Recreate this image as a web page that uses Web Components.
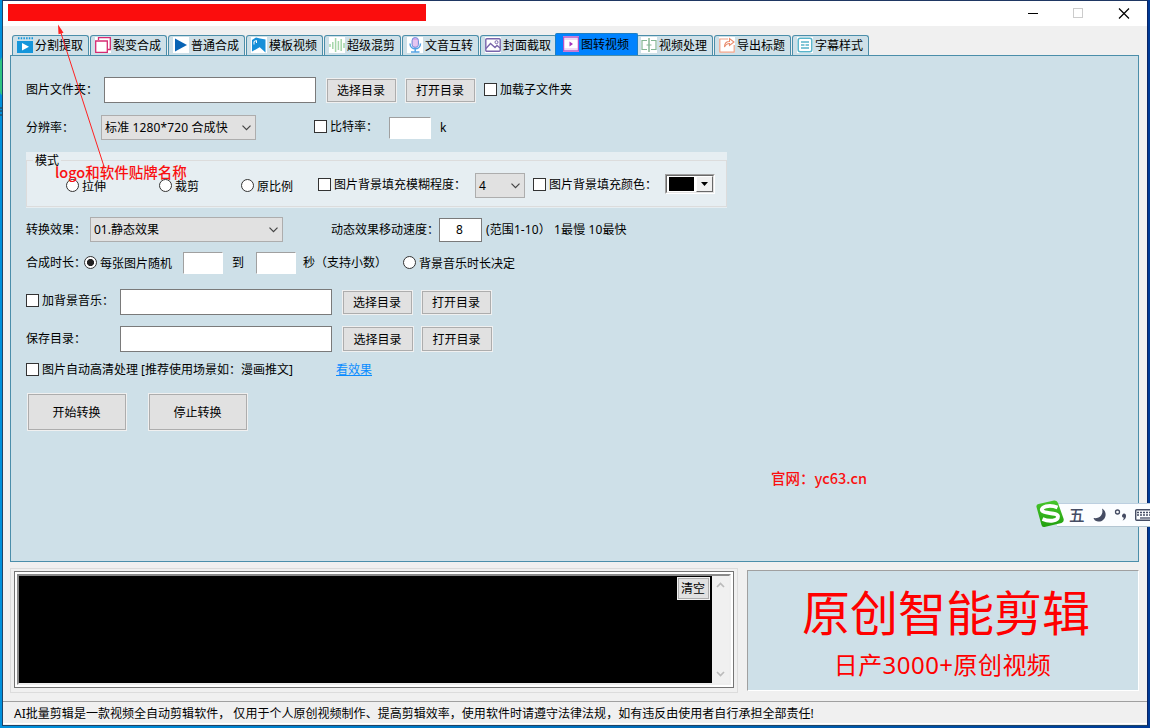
<!DOCTYPE html>
<html lang="zh-CN">
<head>
<meta charset="utf-8">
<title>图转视频</title>
<style>
  body {
    margin: 0;
    width: 1150px;
    height: 728px;
    overflow: hidden;
    position: relative;
    font: 12px/16px "Noto Sans", "Noto Sans CJK SC", sans-serif;
    color: #000;
    background: linear-gradient(90deg, #0090dc, #0068b4 60%, #003a96);
  }
</style>
</head>
<body>
<app-window>
  <tab-bar slot="tabs">
    <tab-item icon="split">分割提取</tab-item>
    <tab-item icon="copy">裂变合成</tab-item>
    <tab-item icon="play">普通合成</tab-item>
    <tab-item icon="template">模板视频</tab-item>
    <tab-item icon="wave">超级混剪</tab-item>
    <tab-item icon="mic">文音互转</tab-item>
    <tab-item icon="image">封面截取</tab-item>
    <tab-item icon="film" active>图转视频</tab-item>
    <tab-item icon="trim">视频处理</tab-item>
    <tab-item icon="export">导出标题</tab-item>
    <tab-item icon="text">字幕样式</tab-item>
  </tab-bar>

  <tab-panel>
    <form-row cols="78px 222px 79px 79px auto" height="26" gap="21">
      <win-label>图片文件夹：</win-label>
      <win-input w="212" h="26"></win-input>
      <win-button>选择目录</win-button>
      <win-button>打开目录</win-button>
      <win-check>加载子文件夹</win-check>
    </form-row>

    <form-row cols="75px 213px 75px 51px auto" height="25" gap="12">
      <win-label>分辨率：</win-label>
      <win-select w="155" style="letter-spacing: .13px">标准 1280*720 合成快</win-select>
      <win-check up>比特率：</win-check>
      <win-input w="42" h="22" flat></win-input>
      <win-label>k</win-label>
    </form-row>

    <group-box legend="模式">
      <form-row cols="93px 82px 77px 157px 58px 132px auto" height="25">
        <win-radio>拉伸</win-radio>
        <win-radio>裁剪</win-radio>
        <win-radio>原比例</win-radio>
        <win-check up>图片背景填充模糊程度：</win-check>
        <win-select w="50">4</win-select>
        <win-check up>图片背景填充颜色：</win-check>
        <color-picker></color-picker>
      </form-row>
    </group-box>

    <form-row cols="64px 241px 108px 47px auto" height="25" gap="9">
      <win-label>转换效果：</win-label>
      <win-select w="193">01.静态效果</win-select>
      <win-label>动态效果移动速度：</win-label>
      <win-input w="43" h="24">8</win-input>
      <win-label style="letter-spacing: .1px">(范围1-10） 1最慢 10最快</win-label>
    </form-row>

    <form-row cols="58px 99px 49px 24px 47px 100px auto" height="22" gap="10">
      <win-label>合成时长：</win-label>
      <win-radio checked>每张图片随机</win-radio>
      <win-input w="40" h="22" flat></win-input>
      <win-label>到</win-label>
      <win-input w="40" h="22" flat></win-input>
      <win-label>秒（支持小数）</win-label>
      <win-radio>背景音乐时长决定</win-radio>
    </form-row>

    <form-row cols="94px 222px 79px auto" height="26" gap="15">
      <win-check up>加背景音乐：</win-check>
      <win-input w="212" h="26"></win-input>
      <win-button>选择目录</win-button>
      <win-button>打开目录</win-button>
    </form-row>

    <form-row cols="94px 222px 79px auto" height="26" gap="11">
      <win-label>保存目录：</win-label>
      <win-input w="212" h="26"></win-input>
      <win-button w="72" h="26">选择目录</win-button>
      <win-button w="72" h="26">打开目录</win-button>
    </form-row>

    <form-row cols="310px auto" height="14" gap="10">
      <win-check>图片自动高清处理 [推荐使用场景如：漫画推文]</win-check>
      <win-link>看效果</win-link>
    </form-row>

    <form-row cols="1px 121px auto" height="38" gap="17">
      <span></span>
      <win-button w="100" h="38">开始转换</win-button>
      <win-button w="100" h="38">停止转换</win-button>
    </form-row>
  </tab-panel>

  <log-view slot="footer">清空</log-view>
  <promo-banner slot="footer">
    <span slot="title">原创智能剪辑</span>
    <span slot="subtitle">日产3000+原创视频</span>
  </promo-banner>

  <span slot="status">AI批量剪辑是一款视频全自动剪辑软件， 仅用于个人原创视频制作、提高剪辑效率，使用软件时请遵守法律法规，如有违反由使用者自行承担全部责任!</span>
</app-window>

<note-arrow></note-arrow>
<note-text style="left: 55px; top: 162px">logo和软件贴牌名称</note-text>
<note-text style="left: 771px; top: 468px">官网：yc63.cn</note-text>
<desktop-edge></desktop-edge>
<ime-bar>五</ime-bar>

<script>
  // Small base class: every element renders once into an open shadow root.
  class BaseElement extends HTMLElement {
    constructor() {
      super();
      this.attachShadow({ mode: "open" });
    }
    connectedCallback() {
      this.shadowRoot.innerHTML = `<style>${this.css}</style>${this.html}`;
    }
    attr(name, fallback) {
      return this.getAttribute(name) || fallback;
    }
    get css() {
      return "";
    }
    get html() {
      return "<slot></slot>";
    }
  }

  class AppWindow extends BaseElement {
    get css() {
      return `
        :host {
          display: flex;
          flex-direction: column;
          box-sizing: border-box;
          width: 1146px;
          height: 726px;
          margin-left: 2px;
          border: 1px solid #1d4468;
          border-top-color: #1f3763;
          border-right-color: #0a2463;
          background: #f0f0f0;
        }
        header {
          display: flex;
          justify-content: space-between;
          height: 25px;
          background: #fff;
        }
        .brand { width: 418px; height: 17px; margin: 3px 0 0 5px; background: #fb0d0d; }
        .controls { width: 119px; height: 25px; }
        .body { padding: 7px 7px 0; }
        .footer { display: flex; gap: 9px; padding: 6px 8px 0 7px; height: 133px; }
        .status {
          height: 23px;
          box-sizing: border-box;
          padding: 4px 0 0 11px;
          border-top: 1px solid #a0a0a0;
          border-bottom: 1px solid #fff;
          letter-spacing: .025px;
          white-space: nowrap;
        }
      `;
    }
    get html() {
      return `
        <header>
          <div class="brand"></div>
          <svg class="controls" viewBox="0 0 119 25" fill="none" shape-rendering="crispEdges">
            <path d="M0 12.500h10" stroke="#000"/>
            <rect x="45.500" y="7.500" width="9" height="9" stroke="#ccc"/>
            <path d="M91 7.500l10 10M101 7.500l-10 10" stroke="#000" stroke-width="1.200" shape-rendering="auto"/>
          </svg>
        </header>
        <div class="body"><slot name="tabs"></slot><slot></slot></div>
        <div class="footer"><slot name="footer"></slot></div>
        <div class="status"><slot name="status"></slot></div>
      `;
    }
  }

  class TabBar extends BaseElement {
    get css() {
      return `:host { display: flex; align-items: flex-end; gap: 1px; height: 22px; padding-left: 2px; }`;
    }
  }

  const ICONS = {
    split: `<path fill="#1496db" d="M0 4h16v12H0z"/><path stroke="#1496db" stroke-dasharray="1.500 1.200" stroke-width="2" d="M1 1.200l15 .1"/><path fill="#fff" d="M5 6v7.500l7-3.700z"/>`,
    copy: `<path fill="#fff" d="M0 0h16v16H0z"/><path fill="none" stroke="#d62a72" stroke-width="1.300" d="M3.500 3V.7h11.800v11.800H13M.7 4h11.600v11.300H.7z"/>`,
    play: `<path fill="#fff" d="M0 0h16v16H0z"/><path fill="#0763b5" d="M2 1.500v13L14 8z"/>`,
    template: `<path fill="#fff" d="M0 0h16v16H0z"/><path fill="#168fd8" d="M1 3l4-2.500 4 1v8.500L1 14.500zM9 1.500l5.500 1v13L9 10.500z"/><path fill="none" stroke="#fff" d="M3 7.500V4.500l2.500-1V6"/>`,
    wave: `<path fill="#fff" d="M0 0h16v16H0z"/><path stroke="#a5d6a9" stroke-width="1.500" d="M1 7v3M3.800 5v7M6.600 1v14M9.400 4v9M12.200 2v12M15 6v5"/>`,
    mic: `<path fill="#fff" d="M0 0h16v16H0z"/><rect x="5" y=".5" width="6.500" height="10" rx="3.200" fill="#d8a8e8" stroke="#7094dc"/><path stroke="#fff" stroke-width=".7" d="M6 4h4.500M6 6h4.500M6 8h4.500"/><path fill="none" stroke="#53a2e4" stroke-width="1.500" d="M3 6.500c0 7 10.500 7 10.500 0M8.200 12v2.500M4 15h8.500"/>`,
    image: `<path fill="#fff" d="M0 0h16v16H0z"/><rect x=".8" y="1.800" width="14.400" height="12.400" rx="1" fill="none" stroke="#7864aa" stroke-width="1.400"/><path fill="none" stroke="#7864aa" stroke-width="1.300" d="M1 11.500l4.500-5 4.500 4 2-2 3 2.500"/><circle cx="11.500" cy="5.200" r="1.500" fill="none" stroke="#7864aa"/>`,
    film: `<path fill="#fff" d="M0 0h16v16H0z"/><path fill="none" stroke="#b352c8" stroke-width="1.300" d="M.6 1h14.800v14H.6z"/><path stroke="#d9a6e4" stroke-width=".8" d="M1 3h14M1 13h14"/><path fill="#a534be" d="M6.500 5.500v5L10 8z"/>`,
    trim: `<path fill="#fff" d="M0 0h16v16H0z"/><path fill="none" stroke="#84b694" stroke-width="1.200" d="M8 3.500H1v9h7M8 3.500h7v9H8"/><path stroke="#fff" stroke-width="4" d="M8 3v10"/><path stroke="#84b694" stroke-width="1.500" d="M8 1v14"/><path stroke="#84b694" d="M5.500 8h5"/>`,
    export: `<path fill="#fff" d="M0 0h16v16H0z"/><path fill="none" stroke="#eda085" stroke-width="1.200" d="M9 2H.8v13.200h14.400V8"/><path fill="#fff" stroke="#e98b6c" stroke-width="1.100" d="M5.500 10c0-4 1.500-5.500 5-5.500V1.500L15 5l-4.500 3.500V6.500C8 6.500 6.500 8 5.500 10z"/>`,
    text: `<path fill="#fff" d="M0 0h16v16H0z"/><rect x="1.200" y="1.200" width="13.600" height="13.600" rx="2" fill="none" stroke="#58b4ca" stroke-width="1.500"/><path stroke="#58b4ca" stroke-width="1.400" d="M4 5h8M4 8h3.500M8.500 8H12M4 11h8"/>`,
  };

  class TabItem extends BaseElement {
    get css() {
      return `
        :host {
          display: flex;
          box-sizing: border-box;
          width: 77px;
          height: 20px;
          padding: 1px 0 0 4px;
          gap: 2px;
          border: 1px solid #4b8eaa;
          border-bottom: 0;
          border-radius: 3px 3px 0 0;
          background: #cee0e8;
          line-height: 18px;
          white-space: nowrap;
        }
        :host([active]) {
          position: relative;
          z-index: 1;
          width: 83px;
          height: 22px;
          margin: 0 -3px;
          padding: 2px 0 0 7px;
          border-color: #1d7fc4;
          border-radius: 2px 2px 0 0;
          background: #0083ff;
        }
        svg { flex: none; width: 16px; height: 16px; }
      `;
    }
    get html() {
      return `<svg viewBox="0 0 16 16">${ICONS[this.attr("icon")]}</svg><slot></slot>`;
    }
  }

  class TabPanel extends BaseElement {
    get css() {
      return `
        :host {
          display: block;
          box-sizing: border-box;
          width: 1129px;
          height: 507px;
          padding-left: 15px;
          border: 1px solid #4b8eaa;
          background: #cee0e8;
        }
      `;
    }
  }

  class FormRow extends BaseElement {
    get css() {
      return `
        :host {
          display: grid;
          grid-template-columns: ${this.attr("cols")};
          align-items: center;
          justify-items: start;
          height: ${this.attr("height")}px;
          padding-top: ${this.attr("gap", 0)}px;
          white-space: nowrap;
        }
      `;
    }
  }

  class WinLabel extends BaseElement {
    get css() {
      return `:host { display: block; margin-top: 0; }`;
    }
  }

  class WinLink extends BaseElement {
    get css() {
      return `:host { display: block; color: #0a8cff; text-decoration: underline; }`;
    }
  }

  class WinInput extends BaseElement {
    get css() {
      return `
        :host {
          display: block;
          box-sizing: border-box;
          width: ${this.attr("w")}px;
          height: ${this.attr("h")}px;
          line-height: ${this.attr("h") - 2}px;
          padding-right: 2px;
          border: 1px solid #7a7a7a;
          background: #fff;
          text-align: center;
        }
        :host([flat]) { border-color: #a0a0a0 #fff #fff #a0a0a0; }
      `;
    }
  }

  class WinButton extends BaseElement {
    get css() {
      return `
        :host {
          display: block;
          box-sizing: border-box;
          width: ${this.attr("w", 71)}px;
          height: ${this.attr("h", 25)}px;
          padding: 1px;
          background: #f0f0f0;
        }
        button {
          all: unset;
          display: block;
          box-sizing: border-box;
          width: 100%;
          height: 100%;
          padding: 1px 1px 0 0;
          line-height: ${this.attr("h", 25) - 5}px;
          border: 1px solid #adadad;
          background: #e1e1e1;
          text-align: center;
        }
      `;
    }
    get html() {
      return `<button type="button"><slot></slot></button>`;
    }
  }

  class WinSelect extends BaseElement {
    get css() {
      return `
        :host {
          display: flex;
          align-items: center;
          justify-content: space-between;
          box-sizing: border-box;
          width: ${this.attr("w")}px;
          height: 25px;
          padding: 0 4px 0 3px;
          border: 1px solid #adadad;
          background: #e1e1e1;
        }
        svg { width: 9px; height: 6px; }
      `;
    }
    get html() {
      return `<span><slot></slot></span><svg viewBox="0 0 9 6"><path d="M.5 .7l4 4 4-4" fill="none" stroke="#444" stroke-width="1.200"/></svg>`;
    }
  }

  class WinCheck extends BaseElement {
    get css() {
      return `
        :host { display: flex; align-items: center; gap: 3px; }
        :host([up]) { margin-top: -2px; }
        i { box-sizing: border-box; width: 13px; height: 13px; margin-top: -1px; border: 1px solid #333; background: #fff; }
      `;
    }
    get html() {
      return `<i></i><slot></slot>`;
    }
  }

  class WinRadio extends BaseElement {
    get css() {
      return `
        :host { display: flex; align-items: center; gap: 3px; margin-top: 2px; }
        i {
          box-sizing: border-box;
          width: 13px;
          height: 13px;
          margin-top: -3px;
          border: 1px solid #333;
          border-radius: 50%;
          background: #fff;
        }
        :host([checked]) i { background: radial-gradient(circle, #222 3.200px, #fff 3.900px); }
      `;
    }
    get html() {
      return `<i></i><slot></slot>`;
    }
  }

  class GroupBox extends BaseElement {
    get css() {
      return `
        :host {
          display: block;
          box-sizing: border-box;
          width: 701px;
          height: 56px;
          margin-top: 12px;
          padding-top: 8px;
          background: #e6eef2;
        }
        fieldset {
          box-sizing: border-box;
          height: 47px;
          margin: 0;
          padding: 12px 0 0 39px;
          border: 1px solid #dcdcdc;
          position: relative;
        }
        b {
          position: absolute;
          left: 6px;
          top: -8px;
          padding: 0 2px;
          font-weight: normal;
          background: #e6eef2;
        }
      `;
    }
    get html() {
      return `<fieldset><b>${this.attr("legend")}</b><slot></slot></fieldset>`;
    }
  }

  class ColorPicker extends BaseElement {
    get css() {
      return `
        :host {
          display: flex;
          box-sizing: border-box;
          width: 50px;
          height: 20px;
          margin-top: -3px;
          border: 1px solid;
          border-color: #a0a0a0 #fff #fff #a0a0a0;
          background: #fff;
        }
        .box { display: flex; flex: 1; border: 1px solid; border-color: #696969 #e3e3e3 #e3e3e3 #696969; }
        .swatch { width: 25px; margin: 1px 2px 1px 2px; background: #000; }
        .drop {
          display: grid;
          place-items: center;
          flex: 1;
          border: 1px solid;
          border-color: #fff #696969 #696969 #fff;
          background: #f0f0f0;
        }
      `;
    }
    get html() {
      return `
        <div class="box">
          <div class="swatch"></div>
          <div class="drop"><svg width="7" height="4"><path d="M0 0h7L3.500 4z"/></svg></div>
        </div>
      `;
    }
  }

  class LogView extends BaseElement {
    get css() {
      return `
        :host { display: block; box-sizing: border-box; width: 728px; height: 125px; padding: 2px 3px; border: 1px solid #dcdcdc; }
        .frame { box-sizing: border-box; height: 117px; padding: 2px; border: 1px solid #747474; background: #fff; }
        .view {
          display: flex;
          box-sizing: border-box;
          height: 111px;
          border: 2px solid;
          border-color: #8a8a8a #eee #eee #8a8a8a;
        }
        .console { display: flex; justify-content: flex-end; flex: 1; background: #000; }
        .scroll { display: flex; flex-direction: column; justify-content: space-between; box-sizing: border-box; width: 17px; padding: 6px 4px; background: #f0f0f0; }
        win-button { margin: 1px 2px 0 0; }
      `;
    }
    get html() {
      return `
        <div class="frame">
          <div class="view">
            <div class="console"><win-button w="33" h="23"><slot></slot></win-button></div>
            <div class="scroll">
              <svg width="9" height="6"><path d="M1 5l3.500-3.500L8 5" fill="none" stroke="#bbb" stroke-width="1.700"/></svg>
              <svg width="9" height="6"><path d="M1 1l3.500 3.500L8 1" fill="none" stroke="#bbb" stroke-width="1.700"/></svg>
            </div>
          </div>
        </div>
      `;
    }
  }

  class PromoBanner extends BaseElement {
    get css() {
      return `
        :host {
          display: flex;
          flex-direction: column;
          align-items: center;
          box-sizing: border-box;
          width: 392px;
          height: 121px;
          margin-top: 2px;
          padding-left: 6px;
          border: 1px solid;
          border-color: #a0a0a0 #fff #fff #a0a0a0;
          background: #cee0e8;
          color: #f00;
          white-space: nowrap;
        }
        h1 { margin: 9px 0 0; font-size: 48px; line-height: 66px; font-weight: 400; }
        p { margin: 2px 0 0 -7px; font-size: 24px; line-height: 34px; letter-spacing: .45px; }
      `;
    }
    get html() {
      return `<h1><slot name="title"></slot></h1><p><slot name="subtitle"></slot></p>`;
    }
  }

  // Red note laid over the form.
  class NoteText extends BaseElement {
    get css() {
      return `
        :host {
          position: absolute;
          z-index: 3;
          font: 500 14.500px/20px "Noto Sans CJK SC", sans-serif;
          color: #fa1010;
          white-space: nowrap;
        }
      `;
    }
  }

  class NoteArrow extends BaseElement {
    get css() {
      return `:host { position: absolute; left: 50px; top: 20px; z-index: 3; } svg { display: block; }`;
    }
    get html() {
      return `
        <svg width="60" height="155">
          <path d="M10 10L54.500 148" stroke="#f22" fill="none"/>
          <path d="M8 4.500L13.500 12.800 8.500 14.200z" fill="#f22"/>
        </svg>
      `;
    }
  }

  // Bits of desktop icons showing at the left of the window.
  class DesktopEdge extends BaseElement {
    get css() {
      return `:host { position: absolute; left: 0; top: 57px; } svg { display: block; }`;
    }
    get html() {
      return `
        <svg width="2" height="62">
          <path d="M0 4q2-4 2-4v38q-2-1-2-4z" fill="#2fc481"/>
          <path d="M0 51h2M0 54h2M0 58h2" stroke="#333"/>
        </svg>
      `;
    }
  }

  class ImeBar extends BaseElement {
    get css() {
      return `
        :host { position: absolute; left: 1035px; top: 499px; z-index: 3; width: 115px; height: 30px; overflow: hidden; }
        .bar {
          display: flex;
          align-items: center;
          box-sizing: border-box;
          height: 24px;
          margin: 4px 0 0 22px;
          padding-left: 12px;
          border-top: 1px solid #bccfe0;
          border-bottom: 1px solid #b4c6d2;
          background: #fbfdff;
          color: #454c63;
          font: 500 15.500px/20px "Noto Sans CJK SC", sans-serif;
        }
        .name { margin-top: -2px; }
        .logo { position: absolute; left: 0; top: 0; }
        .tools { margin-left: 8px; }
      `;
    }
    get html() {
      return `
        <div class="bar">
          <span class="name"><slot></slot></span>
          <svg class="tools" width="60" height="20" fill="#454c63">
            <path d="M9 3.500c7 4 3 14-4 13-3-.4-4-2-4.500-3.500C6 14 11 10 9 3.500z"/>
            <circle cx="24.500" cy="7" r="2" fill="none" stroke="#454c63" stroke-width="1.300"/>
            <path d="M29.500 9.500c1-2 4-1 3.500 2-.3 2-1.500 3.500-3.500 4 1-1 1.500-2 1-3-1.500 0-2-2-1-3z"/>
            <rect x="42.700" y="4.700" width="18" height="10.600" rx="1" fill="none" stroke="#454c63" stroke-width="1.400"/>
            <path d="M44 7.500h16M44 10h16" stroke="#454c63" stroke-width="1.500" stroke-dasharray="2 1"/>
            <path d="M47 13h11" stroke="#454c63" stroke-width="1.300"/>
          </svg>
        </div>
        <svg class="logo" width="31" height="30">
          <defs>
            <linearGradient id="g" x1="0" y1="0" x2="0" y2="1">
              <stop offset="0" stop-color="#47c62c"/>
              <stop offset="1" stop-color="#22a00e"/>
            </linearGradient>
          </defs>
          <path d="M3.500 5L19 1.500q3-.5 4 2.500l5.500 15.500q1 3-2 4.500L9.500 28q-2.500.5-3-2L1.500 8q-.5-2.500 2-3z" fill="url(#g)"/>
          <path d="M22.500 8.500C14 5 5.500 8 7 11.500c1.500 3.500 16 1.500 16 6 0 4.500-8.500 5.500-15.500 2.500" fill="none" stroke="#fff" stroke-width="3.800"/>
        </svg>
      `;
    }
  }

  customElements.define("app-window", AppWindow);
  customElements.define("tab-bar", TabBar);
  customElements.define("tab-item", TabItem);
  customElements.define("tab-panel", TabPanel);
  customElements.define("form-row", FormRow);
  customElements.define("win-label", WinLabel);
  customElements.define("win-link", WinLink);
  customElements.define("win-input", WinInput);
  customElements.define("win-button", WinButton);
  customElements.define("win-select", WinSelect);
  customElements.define("win-check", WinCheck);
  customElements.define("win-radio", WinRadio);
  customElements.define("group-box", GroupBox);
  customElements.define("color-picker", ColorPicker);
  customElements.define("log-view", LogView);
  customElements.define("promo-banner", PromoBanner);
  customElements.define("note-text", NoteText);
  customElements.define("note-arrow", NoteArrow);
  customElements.define("desktop-edge", DesktopEdge);
  customElements.define("ime-bar", ImeBar);
</script>
</body>
</html>
